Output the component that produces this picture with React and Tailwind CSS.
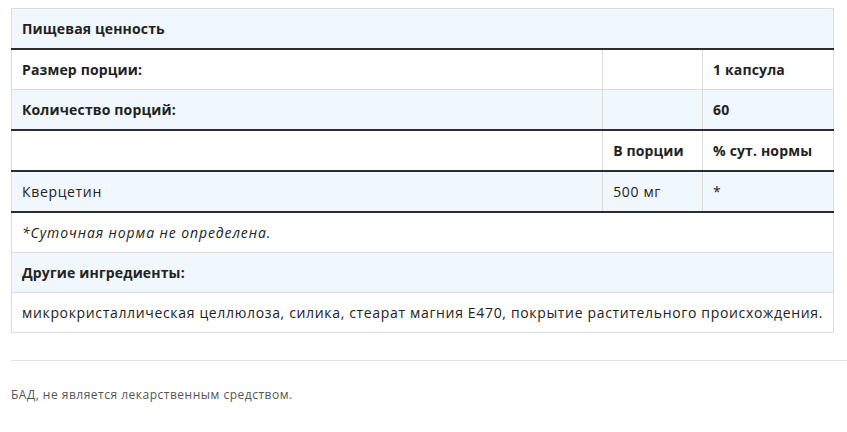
import React from 'react';

const blue = 'bg-[#f0f7fd]';
const line = 'border-l border-[#dcdcdc]';
const bold = 'font-bold tracking-[0.15px]';

const App = () => {
  const cell = 'px-[10px] align-middle';
  return (
    <div className="bg-white w-[847px] h-[432px] pl-[11px] pt-[8px] text-[#222] text-[14px] tracking-[0.66px]" style={{ fontFamily: '"Open Sans", "Noto Sans", sans-serif' }}>
      <table className="w-[823px] border-collapse border border-[#dcdcdc]">
        <colgroup>
          <col className="w-[592px]" />
          <col className="w-[100px]" />
          <col className="w-[131px]" />
        </colgroup>
        <tbody>
          <tr className={`${blue} h-[40px] border-b-2 border-[#2d2d2d]`}>
            <td colSpan={3} className={`${cell} ${bold}`}>Пищевая ценность</td>
          </tr>
          <tr className="bg-white h-[41px] border-b border-[#dcdcdc]">
            <td className={`${cell} ${bold}`}>Размер порции:</td>
            <td className={`${cell} ${line}`}></td>
            <td className={`${cell} ${line} ${bold}`}>1 капсула</td>
          </tr>
          <tr className={`${blue} h-[40px] border-b-2 border-[#2d2d2d]`}>
            <td className={`${cell} ${bold}`}>Количество порций:</td>
            <td className={`${cell} ${line}`}></td>
            <td className={`${cell} ${line} ${bold}`}>60</td>
          </tr>
          <tr className="bg-white h-[41px] border-b-2 border-[#2d2d2d]">
            <td className={cell}></td>
            <td className={`${cell} ${line} ${bold}`}>В порции</td>
            <td className={`${cell} ${line} ${bold}`}>% сут. нормы</td>
          </tr>
          <tr className={`${blue} h-[41px] border-b-2 border-[#2d2d2d]`}>
            <td className={cell}>Кверцетин</td>
            <td className={`${cell} ${line}`}>500 мг</td>
            <td className={`${cell} ${line}`}>*</td>
          </tr>
          <tr className="bg-white h-[41px] border-b border-[#dcdcdc]">
            <td colSpan={3} className={`${cell} italic tracking-[0.9px]`}>*Суточная норма не определена.</td>
          </tr>
          <tr className={`${blue} h-[40px] border-b border-[#dcdcdc]`}>
            <td colSpan={3} className={`${cell} ${bold}`}>Другие ингредиенты:</td>
          </tr>
          <tr className="bg-white h-[40px]">
            <td colSpan={3} className={cell}>микрокристаллическая целлюлоза, силика, стеарат магния E470, покрытие растительного происхождения.</td>
          </tr>
        </tbody>
      </table>
      <div className="mt-[27px] border-t border-[#e2e2e2]"></div>
      <p className="mt-[25px] text-[12px] tracking-[0.5px] text-[#555]">БАД, не является лекарственным средством.</p>
    </div>
  );
};

export default App;
